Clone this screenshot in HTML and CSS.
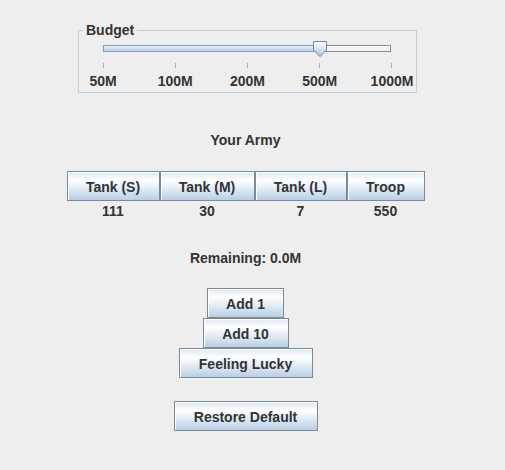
FILE: index.html
```html
<!DOCTYPE html>
<html lang="en">
<head>
    <meta charset="UTF-8">
    <title>Army Builder</title>
    <link rel="stylesheet" href="styles.css">
</head>
<body>
    <div class="window">
        <div class="budget-panel">
            <span class="panel-title">Budget</span>
            <div class="slider">
                <div class="track-fill"></div>
                <div class="track-rest"></div>
                <svg class="thumb" width="16" height="18" viewBox="0 0 16 18">
                    <defs>
                        <linearGradient id="thumbGrad" x1="0" y1="0" x2="0" y2="1">
                            <stop offset="0" stop-color="#ffffff"/>
                            <stop offset="0.5" stop-color="#d6e3f1"/>
                            <stop offset="1" stop-color="#a9c2de"/>
                        </linearGradient>
                    </defs>
                    <path d="M1.5 1.5 H14.5 V10 L8 16.5 L1.5 10 Z" fill="url(#thumbGrad)" stroke="#6f86a3" stroke-width="1"/>
                    <path d="M2.5 2.5 H13.5" stroke="#ffffff" stroke-width="1"/>
                </svg>
            </div>
            <div class="ticks">
                <span></span><span></span><span></span><span></span><span></span>
            </div>
            <div class="tick-labels">
                <span>50M</span>
                <span>100M</span>
                <span>200M</span>
                <span>500M</span>
                <span>1000M</span>
            </div>
        </div>

        <div class="heading">Your Army</div>

        <div class="unit-row">
            <div class="unit">
                <button class="btn unit-s">Tank (S)</button>
                <span class="count">111</span>
            </div>
            <div class="unit">
                <button class="btn unit-m">Tank (M)</button>
                <span class="count">30</span>
            </div>
            <div class="unit">
                <button class="btn unit-l">Tank (L)</button>
                <span class="count">7</span>
            </div>
            <div class="unit">
                <button class="btn unit-t">Troop</button>
                <span class="count">550</span>
            </div>
        </div>

        <div class="remaining">Remaining: 0.0M</div>

        <div class="add-stack">
            <button class="btn add-one">Add 1</button>
            <button class="btn add-ten">Add 10</button>
            <button class="btn lucky">Feeling Lucky</button>
        </div>

        <button class="btn restore">Restore Default</button>
    </div>
</body>
</html>
```

FILE: styles.css
```css
body {
    margin: 0;
    padding: 0;
    background: #eeeeee;
    font-family: "Liberation Sans", Arial, sans-serif;
    font-weight: bold;
    font-size: 14px;
    color: #333333;
}

.window {
    width: 491px;
    height: 470px;
    display: flex;
    flex-direction: column;
    align-items: center;
}

.budget-panel {
    align-self: flex-start;
    position: relative;
    box-sizing: border-box;
    width: 339px;
    height: 63px;
    margin: 30px 0 0 78px;
    border: 1px solid #c3d0de;
}

.panel-title {
    position: absolute;
    top: -9px;
    left: 5px;
    padding: 0 3px 0 2px;
    line-height: 16px;
    background: #eeeeee;
}

.slider {
    position: relative;
    display: flex;
    width: 288px;
    height: 7px;
    margin: 14px 0 0 24px;
}

.track-fill {
    box-sizing: border-box;
    width: 218px;
    height: 7px;
    border: 1px solid #8aa1bd;
    border-right: none;
    background: linear-gradient(#e4edf7, #bcd0e6);
}

.track-rest {
    flex: 1;
    box-sizing: border-box;
    height: 7px;
    border: 1px solid #8c8c8c;
    background: #f2f2f2;
    box-shadow: inset 1px 1px #ffffff;
}

.thumb {
    position: absolute;
    left: 209px;
    top: -5px;
}

.ticks {
    display: flex;
    justify-content: space-between;
    width: 289px;
    height: 5px;
    margin: 11px 0 0 24px;
}

.ticks span {
    width: 1px;
    height: 5px;
    background: #9fb2c8;
}

.tick-labels {
    display: flex;
    justify-content: space-between;
    width: 361px;
    margin: 5px 0 0 -12px;
    line-height: 16px;
}

.tick-labels span {
    width: 72px;
    text-align: center;
}

.heading {
    margin-top: 39px;
    line-height: 16px;
}

.btn {
    box-sizing: border-box;
    height: 30px;
    margin: 0;
    padding: 2px 0 0;
    border: 1px solid #7a8a99;
    background: linear-gradient(#dde8f3 0%, #ffffff 30%, #e6eef7 55%, #b8cfe5 100%);
    box-shadow: inset 1px 1px #ffffff;
    font-family: inherit;
    font-weight: bold;
    font-size: 14px;
    color: #333333;
    cursor: pointer;
}

.unit-row {
    display: flex;
    margin-top: 23px;
}

.unit {
    display: flex;
    flex-direction: column;
    align-items: center;
}

.unit-s { width: 93px; }
.unit-m { width: 95px; }
.unit-l { width: 92px; }
.unit-t { width: 78px; }

.count {
    margin-top: 2px;
    line-height: 16px;
}

.remaining {
    margin-top: 31px;
    line-height: 16px;
}

.add-stack {
    display: flex;
    flex-direction: column;
    align-items: center;
    margin-top: 22px;
}

.add-one { width: 77px; }
.add-ten { width: 86px; }
.lucky { width: 134px; }

.restore {
    width: 144px;
    margin-top: 23px;
}
```
